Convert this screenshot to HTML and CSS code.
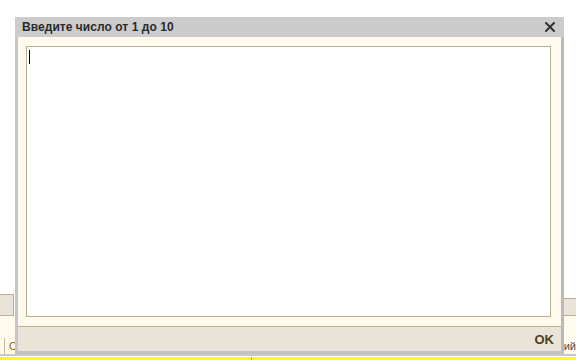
FILE: index.html
```html
<!DOCTYPE html>
<html lang="ru">
<head>
<meta charset="utf-8">
<title>Ввод числа</title>
<link rel="stylesheet" href="styles.css">
</head>
<body>
<div class="page">
  <div class="blank"></div>
  <div class="toolbar">
    <div class="tb-btn tb-left"></div>
    <div class="tb-fill"></div>
    <div class="tb-btn tb-right"></div>
    <div class="tb-btn tb-right2"></div>
  </div>
  <div class="cream-row"></div>
  <div class="head-row">
    <div class="cell c1"></div>
    <div class="cell c2">С</div>
    <div class="cell c3"><span class="rt">ий</span></div>
  </div>
  <div class="yellow-row">
    <div class="ycell y1"></div>
    <div class="ycell y2"></div>
  </div>
</div>

<div class="dialog">
  <div class="titlebar">
    <span class="title">Введите число от 1 до 10</span>
    <svg class="close" width="10" height="10" viewBox="0 0 10 10" aria-hidden="true">
      <path d="M1 1 L9 9 M9 1 L1 9" stroke="#333" stroke-width="2" stroke-linecap="square"/>
    </svg>
  </div>
  <div class="body">
    <div class="input"><span class="caret"></span></div>
  </div>
  <div class="footer">
    <span class="ok">OK</span>
  </div>
</div>
</body>
</html>
```

FILE: styles.css
```css
html, body {
  margin: 0;
  padding: 0;
  background: #ffffff;
  width: 576px;
  height: 360px;
  overflow: hidden;
  font-family: "Liberation Sans", Arial, sans-serif;
}

.page {
  display: flex;
  flex-direction: column;
  width: 576px;
  height: 360px;
}

.blank {
  height: 294px;
  flex: none;
}

.toolbar {
  height: 22px;
  display: flex;
  flex: none;
}

.tb-btn {
  background: #e9e3d8;
  border: 1px solid #b8b08c;
  box-sizing: border-box;
}

.tb-left {
  width: 14px;
  border-left: none;
}

.tb-fill {
  flex: 1;
}

.tb-right {
  width: 9px;
  margin-top: 4px;
  border-right: none;
}

.tb-right2 {
  width: 4px;
  margin-top: 4px;
  border-left: none;
  border-right: none;
}

.cream-row {
  height: 22px;
  background: #fffaee;
  flex: none;
}

.head-row {
  height: 16px;
  display: flex;
  background: #fffaee;
  border-bottom: 2px solid #c8c8c8;
  flex: none;
  font-size: 11px;
  color: #4c4c4c;
}

.cell {
  border-left: 1px solid #c4bd98;
  box-sizing: border-box;
  overflow: hidden;
  white-space: nowrap;
  line-height: 16px;
}

.c1 {
  width: 4px;
  border-left: none;
}

.c2 {
  width: 248px;
  padding-left: 4px;
  color: #a05a10;
}

.c3 {
  flex: 1;
  text-align: right;
}

.rt {
  margin-right: 0;
}

.yellow-row {
  flex: 1;
  display: flex;
  background: #ffff00;
  border-top: 1px solid #ffffff;
}

.ycell {
  box-sizing: border-box;
}

.y1 {
  width: 252px;
  border-right: 1px solid #a8a8a8;
}

.y2 {
  flex: 1;
}

.dialog {
  position: absolute;
  left: 15px;
  top: 17px;
  width: 549px;
  height: 337px;
  box-sizing: border-box;
  display: flex;
  flex-direction: column;
  border-left: 3px solid #c6c6c6;
  border-right: 3px solid #b9b9b9;
  border-bottom: 3px solid #c2c2c2;
  background: #fffaee;
}

.titlebar {
  height: 20px;
  flex: none;
  display: flex;
  align-items: center;
  justify-content: space-between;
  background: #cccccc;
  margin-left: -3px;
  margin-right: -3px;
  padding: 0 9px 0 7px;
}

.title {
  font-size: 12px;
  font-weight: bold;
  color: #2b2b2b;
  letter-spacing: 0.05px;
}

.close {
  display: block;
}

.body {
  flex: 1;
  display: flex;
  padding: 9px 10px 9px 8px;
  background: #fffaee;
}

.input {
  flex: 1;
  background: #ffffff;
  border: 1px solid #b8b08c;
  position: relative;
}

.caret {
  position: absolute;
  left: 2px;
  top: 3px;
  width: 1px;
  height: 14px;
  background: #000000;
}

.footer {
  height: 24px;
  flex: none;
  border-top: 1px solid #b8b08c;
  background: #e9e3d8;
  display: flex;
  align-items: center;
  justify-content: flex-end;
  padding-right: 7px;
}

.ok {
  font-size: 13px;
  font-weight: bold;
  color: #4d3f1a;
}
```
